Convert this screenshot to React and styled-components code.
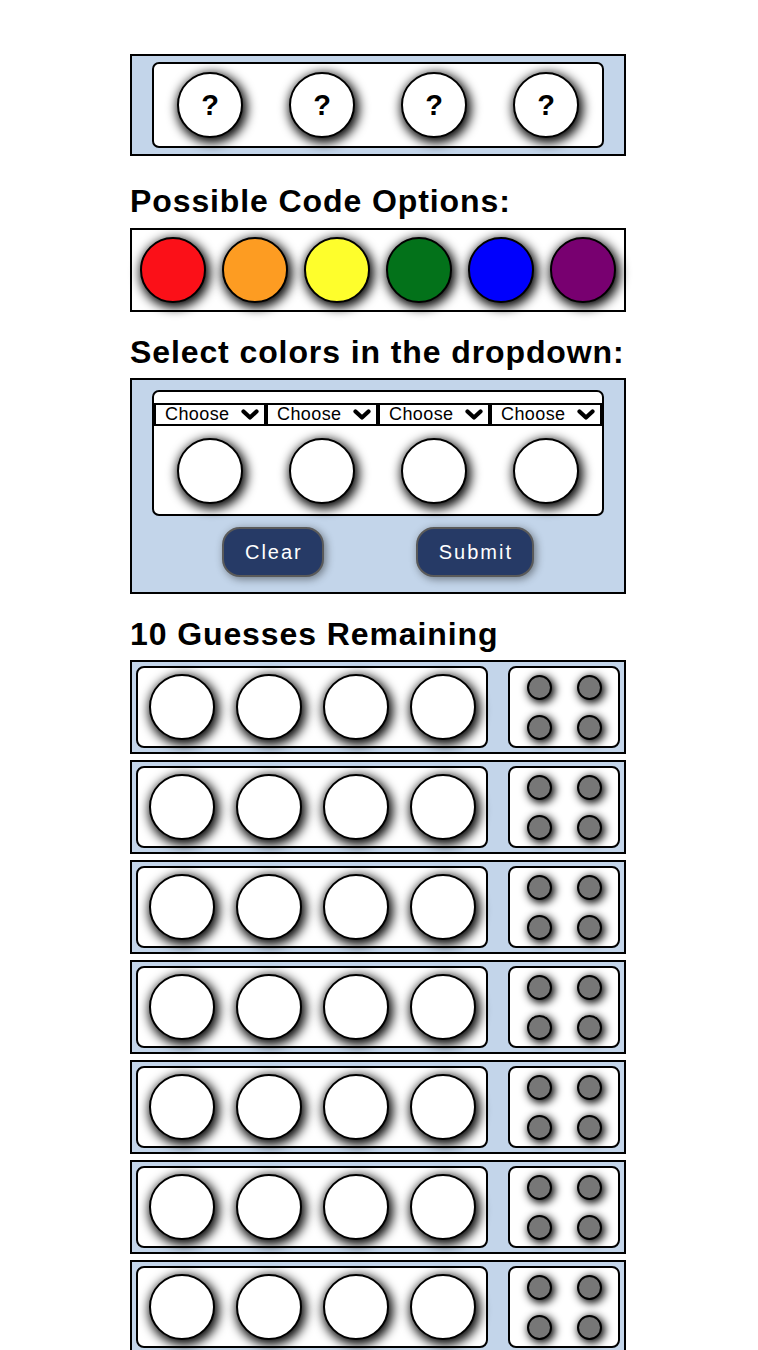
import React from "react";
import styled, { createGlobalStyle } from "styled-components";

const GlobalStyle = createGlobalStyle`
  html, body { margin: 0; padding: 0; background: #ffffff; }
  body { font-family: "Liberation Sans", Arial, sans-serif; color: #000; }
  * { box-sizing: border-box; }
`;

const BLUE = "#c3d5ea";

const Page = styled.main`
  width: 498px;
  margin: 0 auto;
  padding: 54px 2px 40px 0;
`;

const Panel = styled.section`
  border: 2px solid #000;
  background: ${(p) => (p.$tone === "white" ? "#ffffff" : BLUE)};
  padding: ${(p) => p.$pad || "0"};
  margin-top: ${(p) => p.$mt || "0"};
  margin-bottom: ${(p) => p.$mb || "0"};
`;

const Heading = styled.h2`
  font-size: 32px;
  font-weight: 700;
  letter-spacing: 0.9px;
  line-height: normal;
  margin: 22px 0 7px;
`;

const Tray = styled.div`
  background: #fff;
  border: 2px solid #000;
  border-radius: 7px;
  padding: ${(p) => p.$pad || "0"};
`;

const PegRow = styled.div`
  display: flex;
  justify-content: space-around;
  align-items: center;
  padding: ${(p) => p.$pad || "0"};
`;

const Peg = styled.div`
  width: ${(p) => p.$size}px;
  height: ${(p) => p.$size}px;
  border-radius: 50%;
  border: 2px solid #000;
  background: ${(p) => p.$color || "#fff"};
  box-shadow: ${(p) =>
    p.$size > 40 ? "2px 3px 11px 2px #000" : "2px 2px 8px 1px #000"};
  display: flex;
  align-items: center;
  justify-content: center;
  font-size: 29px;
  font-weight: 700;
  flex: none;
`;

const SelectRow = styled.div`
  display: flex;
`;

const SelectWrap = styled.div`
  position: relative;
  width: 25%;
`;

const Select = styled.select`
  appearance: none;
  -webkit-appearance: none;
  width: 100%;
  height: 23px;
  border: 2px solid #000;
  border-radius: 0;
  background: #fff;
  font-family: "Liberation Sans", Arial, sans-serif;
  font-size: 18px;
  letter-spacing: 0.4px;
  color: #000;
  padding: 0 0 0 9px;
  line-height: 19px;
  outline: none;
`;

const Chevron = styled.svg`
  position: absolute;
  right: 7px;
  top: 6px;
  width: 18px;
  height: 11px;
  pointer-events: none;
`;

const ButtonRow = styled.div`
  display: flex;
  justify-content: center;
  gap: 92px;
  margin-top: 11px;
`;

const Button = styled.button`
  background: #263a66;
  color: #fff;
  border: 2px solid #5a5a5a;
  border-radius: 18px;
  font-family: "Liberation Sans", Arial, sans-serif;
  font-size: 20px;
  letter-spacing: 2px;
  line-height: 23px;
  padding: 11.5px 19px 11.5px 21px;
  box-shadow: 2px 2px 8px rgba(0, 0, 0, 0.45);
  cursor: pointer;
`;

const GuessRow = styled.div`
  display: flex;
  justify-content: space-between;
  border: 2px solid #000;
  background: ${BLUE};
  padding: 4px;
  margin-bottom: 6px;
`;

const GuessTray = styled.div`
  width: 352px;
  background: #fff;
  border: 2px solid #000;
  border-radius: 8px;
  display: flex;
  justify-content: space-around;
  align-items: center;
  padding: 6px 0;
`;

const FeedbackTray = styled.div`
  width: 112px;
  background: #fff;
  border: 2px solid #000;
  border-radius: 8px;
  display: grid;
  grid-template-columns: 25px 25px;
  grid-template-rows: 25px 25px;
  column-gap: 25px;
  row-gap: 15px;
  place-content: center;
`;

const OPTIONS = ["#fb1018", "#fd9c22", "#fefe2c", "#03721a", "#0000fd", "#780070"];

function Dropdown() {
  return (
    <SelectWrap>
      <Select defaultValue="">
        <option value="">Choose</option>
        <option value="red">Red</option>
        <option value="orange">Orange</option>
        <option value="yellow">Yellow</option>
        <option value="green">Green</option>
        <option value="blue">Blue</option>
        <option value="purple">Purple</option>
      </Select>
      <Chevron viewBox="0 0 18 11">
        <polyline
          points="2.5,2.5 9,8.5 15.5,2.5"
          fill="none"
          stroke="#000"
          strokeWidth="4.2"
          strokeLinecap="round"
          strokeLinejoin="round"
        />
      </Chevron>
    </SelectWrap>
  );
}

export default function App() {
  const four = [0, 1, 2, 3];
  const guesses = Array.from({ length: 10 }, (_, i) => i);
  return (
    <>
      <GlobalStyle />
      <Page>
        <Panel $pad="6px 20px" $mb="26.5px">
          <Tray $pad="8px 0">
            <PegRow>
              {four.map((i) => (
                <Peg key={i} $size={66}>?</Peg>
              ))}
            </PegRow>
          </Tray>
        </Panel>

        <Heading>Possible Code Options:</Heading>
        <Panel $tone="white" $pad="7px 0" $mt="8.7px">
          <PegRow>
            {OPTIONS.map((c) => (
              <Peg key={c} $size={66} $color={c} />
            ))}
          </PegRow>
        </Panel>

        <Heading>Select colors in the dropdown:</Heading>
        <Panel $pad="10px 20px 15px">
          <Tray $pad="11px 0 0">
            <SelectRow>
              {four.map((i) => (
                <Dropdown key={i} />
              ))}
            </SelectRow>
            <PegRow $pad="12px 0 10px">
              {four.map((i) => (
                <Peg key={i} $size={66} />
              ))}
            </PegRow>
          </Tray>
          <ButtonRow>
            <Button>Clear</Button>
            <Button>Submit</Button>
          </ButtonRow>
        </Panel>

        <Heading>10 Guesses Remaining</Heading>
        {guesses.map((g) => (
          <GuessRow key={g}>
            <GuessTray>
              {four.map((i) => (
                <Peg key={i} $size={66} />
              ))}
            </GuessTray>
            <FeedbackTray>
              {four.map((i) => (
                <Peg key={i} $size={25} $color="#777777" />
              ))}
            </FeedbackTray>
          </GuessRow>
        ))}
      </Page>
    </>
  );
}
